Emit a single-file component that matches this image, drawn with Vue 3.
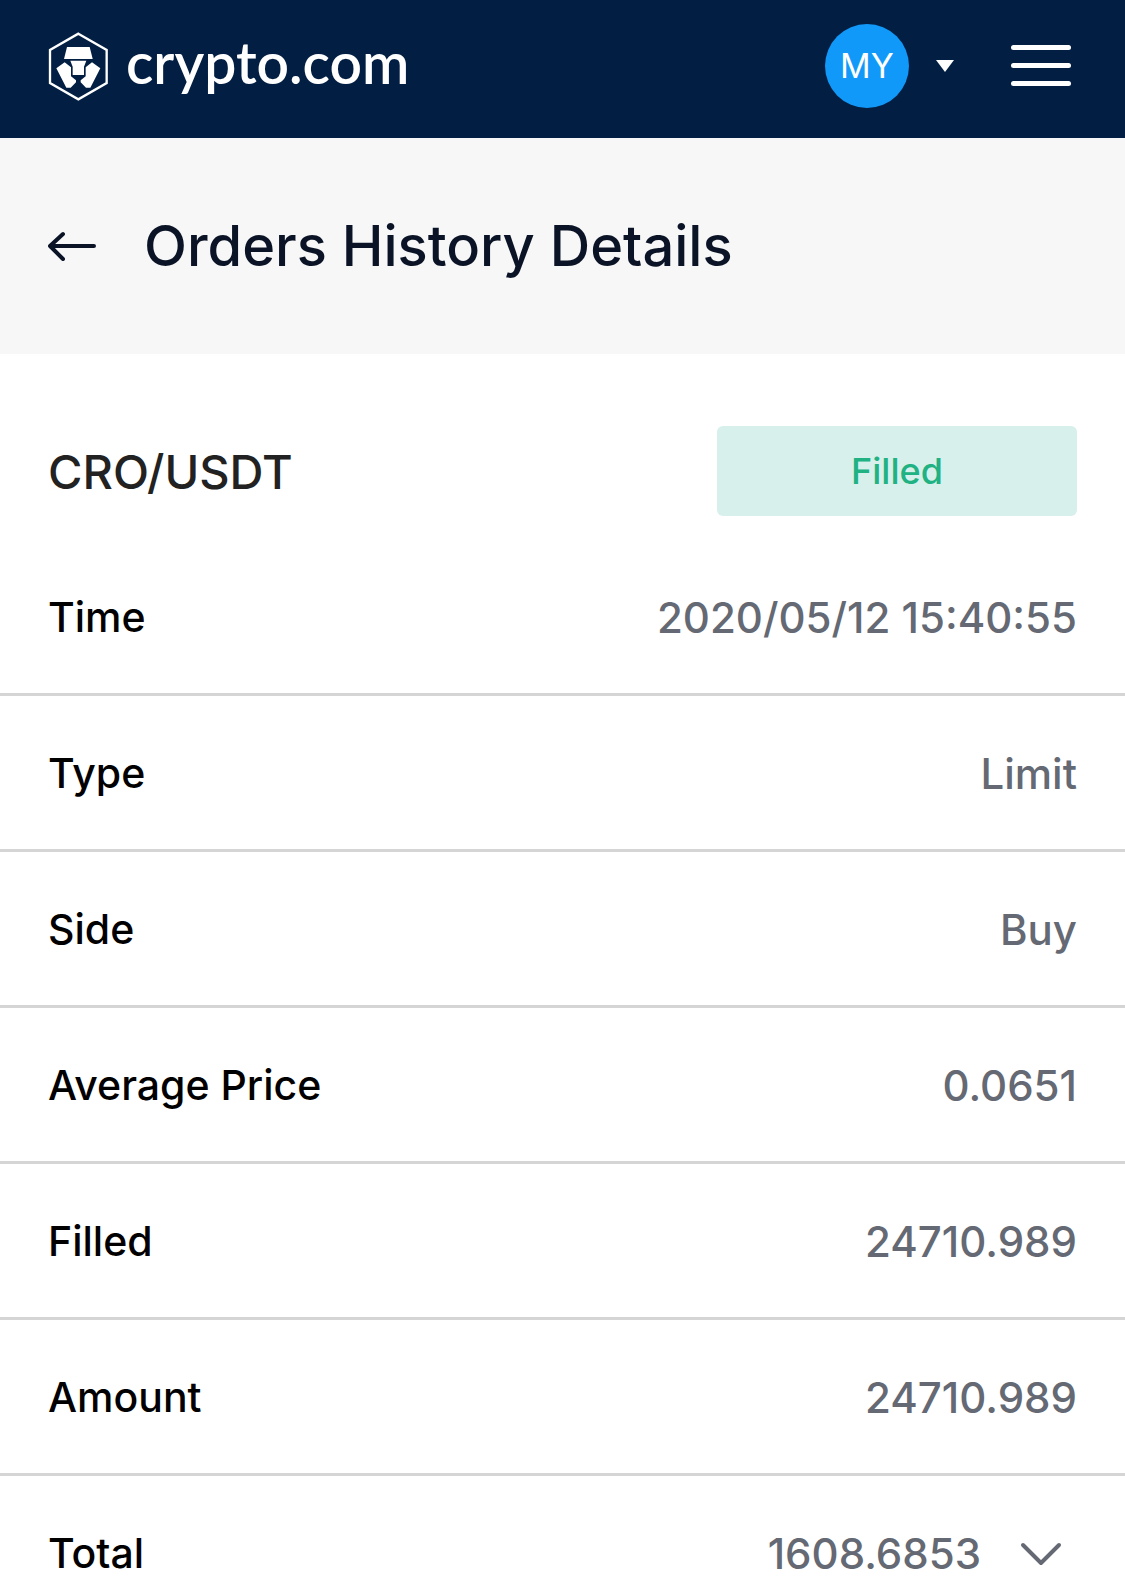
<script setup>
import { ref } from 'vue'

const pair = 'CRO/USDT'
const status = 'Filled'

const rows = [
  { label: 'Time', value: '2020/05/12 15:40:55' },
  { label: 'Type', value: 'Limit' },
  { label: 'Side', value: 'Buy' },
  { label: 'Average Price', value: '0.0651' },
  { label: 'Filled', value: '24710.989' },
  { label: 'Amount', value: '24710.989' },
  { label: 'Total', value: '1608.6853', expandable: true }
]

const expanded = ref(false)

function toggle() {
  expanded.value = !expanded.value
}
</script>

<template>
  <div class="page">
    <header class="topbar">
      <a class="brand" href="#">
        <svg class="brand-mark" viewBox="0 0 180 207" aria-hidden="true">
          <path d="M91 5 176 54V153L91 202 6 153V54Z" fill="none" stroke="#fff" stroke-width="7" />
          <g fill="#fff">
            <path d="M57 45H125L134 81H48Z" />
            <path d="M67 86H115L108 104V129H74V104Z" />
            <path d="M25 109 50 91 69 106V133L84 145V151L68 167H55Z" />
            <path d="M157 109 132 91 113 106V133L98 145V151L114 167H127Z" />
          </g>
        </svg>
        <span class="brand-name">crypto.com</span>
      </a>

      <div class="actions">
        <button type="button" class="account" aria-label="Account">
          <span class="avatar">MY</span>
          <svg class="caret" viewBox="0 0 18 12" aria-hidden="true">
            <path d="M0 0H18L9 12Z" fill="#fff" />
          </svg>
        </button>
        <button type="button" class="burger" aria-label="Menu">
          <span></span>
          <span></span>
          <span></span>
        </button>
      </div>
    </header>

    <div class="heading">
      <a class="back" href="#" aria-label="Back">
        <svg viewBox="0 0 48 30" aria-hidden="true">
          <path
            d="M15 3 2 15 15 28M2 15H46"
            fill="none"
            stroke="#0b1426"
            stroke-width="4"
            stroke-linecap="round"
            stroke-linejoin="round"
          />
        </svg>
      </a>
      <h1>Orders History Details</h1>
    </div>

    <main>
      <div class="summary">
        <h2>{{ pair }}</h2>
        <span class="status">{{ status }}</span>
      </div>

      <dl class="details">
        <div v-for="row in rows" :key="row.label" class="row">
          <dt>{{ row.label }}</dt>
          <dd>
            {{ row.value }}
            <button
              v-if="row.expandable"
              type="button"
              class="expand"
              :class="{ open: expanded }"
              :aria-expanded="expanded"
              aria-label="Total details"
              @click="toggle"
            >
              <svg viewBox="0 0 42 24" aria-hidden="true">
                <path
                  d="M3 3 21 21 39 3"
                  fill="none"
                  stroke="#646973"
                  stroke-width="4"
                  stroke-linecap="round"
                  stroke-linejoin="round"
                />
              </svg>
            </button>
          </dd>
        </div>
      </dl>
    </main>
  </div>
</template>

<style>
body {
  margin: 0;
  background: #fff;
}
</style>

<style scoped>
.page {
  font-family: Inter, 'Liberation Sans', sans-serif;
  background: #fff;
}

button {
  padding: 0;
  border: none;
  background: none;
  font-family: inherit;
  cursor: pointer;
}

svg {
  display: block;
}

.topbar {
  display: flex;
  align-items: center;
  justify-content: space-between;
  padding: 24px 54px 30px 48px;
  background: #021f43;
}

.brand {
  display: flex;
  align-items: center;
  gap: 18px;
  color: #fff;
  text-decoration: none;
}

.brand-mark {
  width: 60px;
  height: 69px;
}

.brand-name {
  padding-bottom: 8px;
  font-family: Lato, sans-serif;
  font-size: 57px;
  font-weight: 600;
  line-height: 64px;
}

.actions {
  display: flex;
  align-items: center;
  gap: 57px;
}

.account {
  display: flex;
  align-items: center;
  gap: 27px;
}

.avatar {
  display: flex;
  align-items: center;
  justify-content: center;
  width: 84px;
  height: 84px;
  border-radius: 50%;
  background: #1199fa;
  color: #fff;
  font-size: 34px;
  font-weight: 400;
  line-height: 42px;
}

.caret {
  width: 18px;
  height: 12px;
}

.burger {
  display: grid;
  gap: 13px;
  width: 60px;
  padding-bottom: 2px;
}

.burger span {
  height: 5px;
  border-radius: 3px;
  background: #fff;
}

.heading {
  display: flex;
  align-items: center;
  gap: 48px;
  padding: 72px 48px;
  background: #f7f7f7;
}

.back {
  width: 48px;
}

h1,
h2 {
  margin: 0;
  font-weight: 500;
}

h1 {
  color: #0b1426;
  font-size: 56px;
  line-height: 72px;
}

.summary {
  display: flex;
  align-items: center;
  justify-content: space-between;
  padding: 72px 48px 24px;
}

h2 {
  color: #222;
  font-size: 47px;
}

.status {
  width: 360px;
  border-radius: 6px;
  background: #d8f0eb;
  color: #20b283;
  font-size: 36px;
  font-weight: 500;
  line-height: 90px;
  text-align: center;
}

.details {
  margin: 0;
}

.row {
  display: flex;
  align-items: center;
  justify-content: space-between;
  padding: 49px 48px 47px;
  border-bottom: 3px solid #d5d5d5;
  font-size: 42px;
  font-weight: 500;
  line-height: 57px;
}

dt {
  color: #000;
  font-size: 41px;
}

dd {
  display: flex;
  align-items: center;
  gap: 24px;
  margin: 0;
  color: #646973;
}

.expand {
  display: flex;
  justify-content: center;
  width: 72px;
}

.expand svg {
  width: 42px;
}

.expand.open svg {
  transform: rotate(180deg);
}
</style>
